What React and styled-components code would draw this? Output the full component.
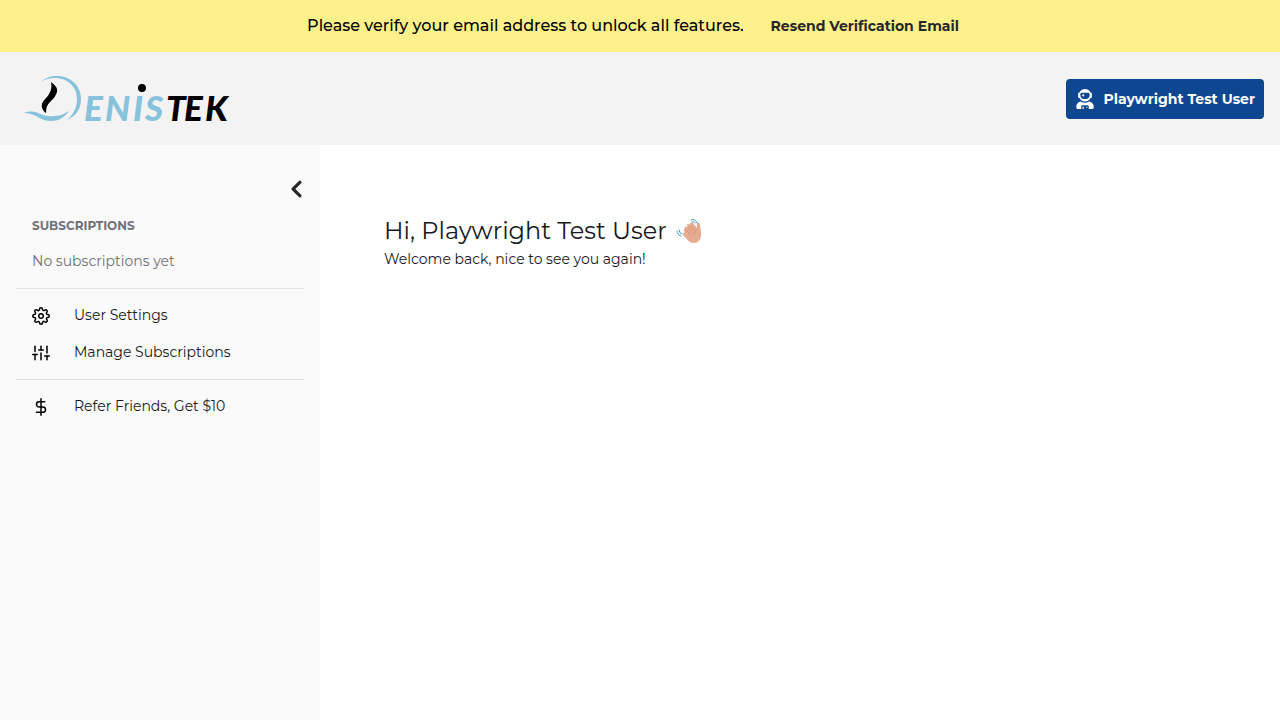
import React from "react";
import styled, { createGlobalStyle } from "styled-components";
import { FaChevronLeft, FaUserAstronaut } from "react-icons/fa";
import { FiSliders, FiDollarSign, FiSettings } from "react-icons/fi";

const GlobalStyle = createGlobalStyle`
  *, *::before, *::after { box-sizing: border-box; }
  body {
    margin: 0;
    background: #fff;
    color: #18181b;
    font-family: Montserrat, Inter, "Open Sans", sans-serif;
    font-size: 14px;
    line-height: 21px;
  }
  button { font: inherit; color: inherit; border: 0; background: none; padding: 0; cursor: pointer; }
  h1, h2, p, ul { margin: 0; padding: 0; }
`;

const Page = styled.div`
  min-height: 100vh;
  display: flex;
  flex-direction: column;
`;

const Banner = styled.div`
  display: flex;
  align-items: center;
  justify-content: center;
  gap: 27px;
  min-height: 52px;
  padding: 0 16px;
  background: #fef08a;
  color: #000;
  font-size: 16px;
  font-weight: 500;
  line-height: 24px;
`;

const ResendButton = styled.button`
  && {
    color: #27272a;
    font-size: 14px;
    font-weight: 700;
    margin-right: 14px;
  }
`;

const Header = styled.header`
  display: flex;
  align-items: center;
  justify-content: space-between;
  padding: 16px;
  background: #f3f3f3;
`;

const LogoLink = styled.a`
  display: block;
  svg { display: block; }
`;

const LogoText = styled.text`
  font-family: Lato, sans-serif;
  font-size: 35px;
  font-weight: 900;
  font-style: italic;
  fill: ${(p) => (p.$dark ? "#000" : "#86c2db")};
`;

const UserButton = styled.button`
  && {
    display: flex;
    align-items: center;
    gap: 8px;
    height: 40px;
    padding: 0 9px;
    border-radius: 4px;
    background: #0e478f;
    color: #fff;
    font-size: 14px;
    font-weight: 700;
    line-height: 20px;
  }
`;

const Body = styled.div`
  flex: 1;
  display: flex;
`;

const Sidebar = styled.aside`
  flex: 0 0 25%;
  min-width: 280px;
  max-width: 320px;
  padding: 32px 16px;
  background: #fafafa;
`;

const CollapseButton = styled.button`
  && {
    display: flex;
    margin-left: auto;
    padding: 2px 0;
    color: #27272a;
  }
  svg { width: 15px; height: 20px; }
`;

const SectionTitle = styled.h2`
  padding: 16px 16px 0;
  color: #71717a;
  font-size: 12px;
  font-weight: 700;
  line-height: 18px;
`;

const EmptyNote = styled.p`
  padding: 16px;
  color: #71717a;
`;

const NavGroup = styled.ul`
  list-style: none;
  border-top: 1px solid #e4e4e7;
  padding: 8px 0;
`;

const NavLink = styled.a`
  display: flex;
  align-items: center;
  gap: 24px;
  padding: 8px 16px;
  color: #18181b;
  text-decoration: none;
  svg { color: #000; }
`;

const Main = styled.main`
  flex: 1;
  padding: 68px 64px;
`;

const Greeting = styled.h1`
  display: flex;
  align-items: center;
  gap: 9px;
  font-size: 24px;
  font-weight: 400;
  line-height: 36px;
`;

const LETTERS = [
  { char: "E", x: 84 },
  { char: "N", x: 105 },
  { char: "I", x: 133 },
  { char: "S", x: 145 },
  { char: "T", x: 166, dark: true },
  { char: "E", x: 184, dark: true },
  { char: "K", x: 205, dark: true },
];

function Logo() {
  return (
    <svg width="220" height="61" viewBox="16 68 220 61" role="img" aria-label="Denistek">
      <path fill="#86c2db" d="M41 82C46 77 52 76 57 76C71 76 81 86 81 99C81 109 76 116 67 120C73 115 77 108 77 99C77 87 68 78 55 78C50 78 45 79 41 82Z" />
      <path fill="#86c2db" d="M24 113C28 111 34 111 38 113C43 115 47 117 54 116C60 116 64 114 69 111C64 118 58 121 51 121C44 121 40 118 36 116C32 114 28 113 24 113Z" />
      <path fill="#000" d="M51 82C55 85 58 88 57 92C56 96 53 99 50 102C47 105 46 108 46 113C43 111 41 107 42 104C43 100 47 98 49 94C51 91 52 87 51 82Z" />
      {LETTERS.map((l) => (
        <LogoText key={l.x} x={l.x} y="121" $dark={l.dark}>{l.char}</LogoText>
      ))}
      <circle cx="142" cy="88" r="4" fill="#000" />
    </svg>
  );
}

function WavingHand() {
  return (
    <svg width="26" height="26" viewBox="0 0 26 26" aria-hidden="true">
      <path fill="#e6ab91" d="M9 11C8 9 10 8 11 9L12 9C10 7 11 5 13 6L14 7C14 4 16 4 17 5L21 10L21 6C21 4 24 4 24 7L25 14C26 20 23 25 18 25C13 25 11 21 8 18C6 16 7 14 9 15L8 13C7 12 8 11 9 11Z" />
      <path fill="none" stroke="#c98468" strokeWidth=".6" strokeLinecap="round" d="M9 11L14 16M12 9L16 14M14 7L18 12M18 16Q18 13 21 11" />
      <path fill="none" stroke="#3d9bd9" strokeLinecap="round" d="M15 2Q19 0 21 5M16 4Q18 3 19 5M1 13Q1 17 5 18M3 12Q3 15 6 16" />
    </svg>
  );
}

export default function App() {
  return (
    <Page>
      <GlobalStyle />
      <Banner>
        <span>Please verify your email address to unlock all features.</span>
        <ResendButton type="button">Resend Verification Email</ResendButton>
      </Banner>
      <Header>
        <LogoLink href="#"><Logo /></LogoLink>
        <UserButton type="button"><FaUserAstronaut size={20} />Playwright Test User</UserButton>
      </Header>
      <Body>
        <Sidebar>
          <CollapseButton type="button" aria-label="Collapse sidebar"><FaChevronLeft /></CollapseButton>
          <SectionTitle>SUBSCRIPTIONS</SectionTitle>
          <EmptyNote>No subscriptions yet</EmptyNote>
          <nav>
            <NavGroup>
              <li><NavLink href="#"><FiSettings size={18} />User Settings</NavLink></li>
              <li><NavLink href="#"><FiSliders size={18} />Manage Subscriptions</NavLink></li>
            </NavGroup>
            <NavGroup>
              <li><NavLink href="#"><FiDollarSign size={18} />Refer Friends, Get $10</NavLink></li>
            </NavGroup>
          </nav>
        </Sidebar>
        <Main>
          <Greeting>Hi, Playwright Test User <WavingHand /></Greeting>
          <p>Welcome back, nice to see you again!</p>
        </Main>
      </Body>
    </Page>
  );
}
